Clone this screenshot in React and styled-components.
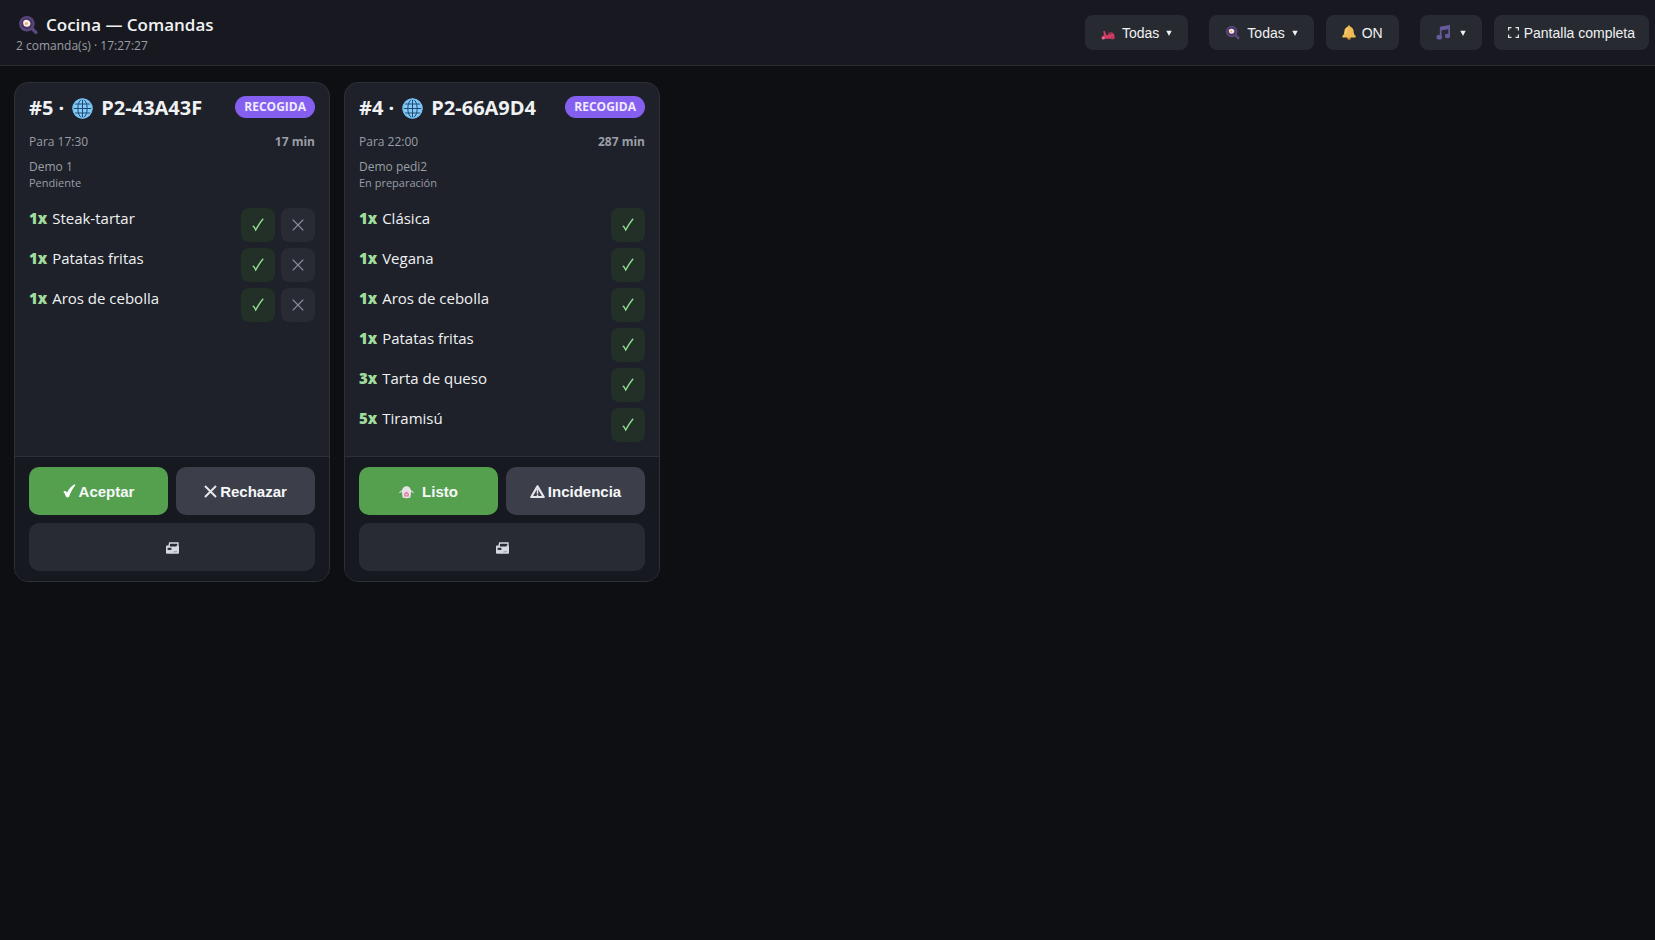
import React, { useState } from 'react';
import styled, { createGlobalStyle } from 'styled-components';

const GlobalStyle = createGlobalStyle`
    * {
        box-sizing: border-box;
    }

    body {
        margin: 0;
        background: #0e0f12;
        color: #f0f1f3;
        font-family: 'Open Sans', 'Noto Sans', sans-serif;
    }

    svg {
        display: block;
        flex: none;
    }
`

const Header = styled.header`
    display: flex;
    justify-content: space-between;
    align-items: center;
    padding: 11px 6px 11px 16px;
    background: #181920;
    border-bottom: 1px solid #2b2d33;
`

const Heading = styled.div`
    padding-top: 2px;
`

const Title = styled.h1`
    display: flex;
    align-items: center;
    gap: 8px;
    margin: 0;
    padding-left: 2px;
    font-size: 17px;
    line-height: 24px;
    font-weight: 600;
`

const Subtitle = styled.p`
    margin: 0;
    font-size: 12px;
    line-height: 17px;
    color: #9a9ea6;
`

const Toolbar = styled.div`
    display: flex;
    gap: 21px;
`

const ToolGroup = styled.div`
    display: flex;
    gap: 12px;
`

const ToolButton = styled.button`
    display: flex;
    align-items: center;
    gap: ${props => props.$gap || 7}px;
    height: 35px;
    padding: 0 ${props => props.$pad || 16}px;
    border: 0;
    border-radius: 8px;
    background: #272a31;
    color: #f0f1f3;
    font: 14px 'Liberation Sans', Arial, sans-serif;
    cursor: pointer;
`

const Board = styled.main`
    display: grid;
    grid-template-columns: repeat(auto-fill, minmax(300px, 1fr));
    gap: 14px;
    padding: 16px 5px 14px 14px;
`

const Card = styled.article`
    display: flex;
    flex-direction: column;
    overflow: hidden;
    border: 1px solid #2d3038;
    border-radius: 14px;
    background: #1e2129;
`

const CardBody = styled.div`
    flex: 1;
    padding: 13px 14px 14px;
`

const CardRow = styled.div`
    display: flex;
    justify-content: space-between;
    align-items: flex-start;
`

const OrderCode = styled.h2`
    display: flex;
    align-items: center;
    gap: 8px;
    margin: 0;
    font-size: 20px;
    line-height: 24px;
    font-weight: 700;
`

const Badge = styled.span`
    padding: 0 9px;
    border-radius: 11px;
    background: #8560f0;
    color: #f0ebff;
    font-size: 12px;
    line-height: 22px;
    font-weight: 700;
`

const Meta = styled.div`
    display: flex;
    justify-content: space-between;
    margin: 13px 0 7px;
    color: #9a9ea6;
    font-size: 12px;
    line-height: 18px;
`

const Customer = styled.p`
    margin: 0;
    color: #9a9ea6;
    font-size: 12px;
    line-height: 17px;
`

const Status = styled.p`
    margin: 0;
    color: #9a9ea6;
    font-size: 11px;
    line-height: 16px;
`

const Items = styled.ul`
    display: flex;
    flex-direction: column;
    gap: 6px;
    margin: 17px 0 0;
    padding: 0;
    list-style: none;
`

const Item = styled.li`
    display: flex;
    justify-content: space-between;
    font-size: 15px;
    line-height: 20px;
`

const Quantity = styled.b`
    margin-right: 1px;
    color: #a0dc9c;
    font-weight: 800;
`

const ItemActions = styled.div`
    display: flex;
    gap: 6px;
`

const ItemButton = styled.button`
    display: grid;
    place-items: center;
    width: 34px;
    height: 34px;
    padding: 0;
    border: 0;
    border-radius: 8px;
    background: ${props => props.$ok ? '#223028' : '#282a34'};
    color: ${props => props.$ok ? '#8fdc8a' : '#9194a0'};
    cursor: pointer;
`

const CardFooter = styled.footer`
    display: grid;
    grid-template-columns: 1fr 1fr;
    gap: 8px;
    padding: 10px 14px;
    border-top: 1px solid #2d3038;
    background: #161920;
`

const backgrounds = { accept: '#54a04f', neutral: '#3c3e49', print: '#282b32' }

const ActionButton = styled.button`
    display: flex;
    justify-content: center;
    align-items: center;
    gap: ${props => props.$gap || 3}px;
    grid-column: ${props => props.$kind === 'print' ? '1 / -1' : 'auto'};
    height: 48px;
    border: 0;
    border-radius: 10px;
    background: ${props => backgrounds[props.$kind]};
    color: #f6f7f9;
    font: bold 15px 'Liberation Sans', Arial, sans-serif;
    cursor: pointer;
`

const PanIcon = ({ size }) => (
    <svg width={size} height={size} viewBox="0 0 18 18" aria-hidden="true">
        <path d="M12.5 12l3.500 3.700" stroke="#5a4a7c" strokeWidth="3" strokeLinecap="round" />
        <circle cx="8" cy="7.8" r="7" fill="#5a467e" />
        <circle cx="8" cy="7.8" r="5" fill="#463560" />
        <path d="M4.6 7.2c0-2.2 1.6-3 3.400-2.800 1.800 0 3.200 1.400 3.200 3.200 0 1.800-1.500 3.200-3.400 3-1.800-.1-3.200-1.400-3.200-3.400z" fill="#fbeeea" />
        <circle cx="7.5" cy="7.8" r="1.3" fill="#eda768" />
    </svg>
)

const ScooterIcon = () => (
    <svg width="14" height="14" viewBox="0 0 14 14" aria-hidden="true">
        <path d="M2.2 5.2l1.6-.4 1.6 4.400 1.800-.2.2-2.200 3.600-.6 2 2 .8 3.800-.8.8H.6L.4 11l2.600-2z" fill="#d23e63" />
        <path d="M7.6 7l3.600-.4.8 1.200-4.400.6z" fill="#8f3049" />
        <circle cx="2.4" cy="12.2" r="1.3" fill="#e0749a" />
        <circle cx="11.3" cy="12.2" r="1.4" fill="#b8345a" />
    </svg>
)

const BellIcon = () => (
    <svg width="14" height="15" viewBox="0 0 14 15" aria-hidden="true">
        <circle cx="7" cy="12.8" r="1.9" fill="#d98a2b" />
        <path d="M7 .6c.8 0 1.2.5 1.3 1.2 2.4.7 3.3 2.7 3.4 5 .1 2 .8 3.2 1.9 4.3.5.6.2 1.5-.6 1.500H1c-.8 0-1.100-.9-.6-1.500 1.100-1.100 1.800-2.300 1.900-4.300.1-2.300 1-4.300 3.400-5C5.800 1.100 6.200.6 7 .6z" fill="#f0bb55" />
        <path d="M5.3 3.2C3.9 4.2 4 6.5 3.7 8.5" stroke="#ffdf8c" fill="none" />
    </svg>
)

const MusicIcon = () => (
    <svg width="15" height="15" viewBox="0 0 16 16" aria-hidden="true">
        <path d="M5 12.5V2.5L14 1v10.3" fill="none" stroke="#675a9c" strokeWidth="1.8" />
        <path d="M5 2L14.8.6v3.600L5 5.8z" fill="#675a9c" />
        <ellipse cx="3.5" cy="13" rx="3" ry="2.5" fill="#675a9c" />
        <ellipse cx="12.3" cy="11.6" rx="2.8" ry="2.4" fill="#675a9c" />
    </svg>
)

const ExpandIcon = () => (
    <svg width="11" height="11" viewBox="0 0 11 11" aria-hidden="true">
        <path d="M.6 3.5V.6h2.9M7.5.6h2.9v2.9M10.4 7.5v2.9H7.5M3.5 10.4H.6V7.5" fill="none" stroke="#e4e6ea" strokeWidth="1.2" />
    </svg>
)

const CaretIcon = () => (
    <svg width="6" height="6" viewBox="0 0 6 6" aria-hidden="true">
        <path d="M.3.8h5.4L3 6z" fill="#f0f1f3" />
    </svg>
)

const GlobeIcon = () => (
    <svg width="21" height="21" viewBox="0 0 21 21" aria-hidden="true">
        <circle cx="10.5" cy="10.5" r="10" fill="#86cbf8" />
        <g fill="none" stroke="#1d4a75" strokeWidth="1">
            <ellipse cx="10.5" cy="10.5" rx="4.7" ry="9.2" />
            <path d="M10.5 1.5v18M1.5 10.5h18M3 6h15M3 15h15" />
        </g>
        <circle cx="10.5" cy="10.5" r="9.5" fill="none" stroke="#74bdf0" strokeWidth="1.4" />
    </svg>
)

const CheckIcon = () => (
    <svg width="12" height="14" viewBox="0 0 12 14" aria-hidden="true">
        <path d="M.8 8c1.400.5 2.200 2.200 2.900 4C6 8 8 4.400 11.200.8" fill="none" stroke="currentColor" strokeWidth="1.4" />
    </svg>
)

const CrossIcon = () => (
    <svg width="12" height="12" viewBox="0 0 12 12" aria-hidden="true">
        <path d="M.7.7l10.6 10.600M11.300.7L.7 11.300" stroke="currentColor" strokeWidth="1.2" />
    </svg>
)

const BoldCheckIcon = () => (
    <svg width="13" height="14" viewBox="0 0 13 14" aria-hidden="true">
        <path d="M.3 8C1.6 6.6 3.2 6.8 4 8.8 5.5 5.3 8 2.2 11.5.3l1 .7C9.9 4 7.7 8 6.2 12.5c-.6 1.2-2.9 1.200-3.300.1C2.300 10.600 1.600 9 .3 8z" fill="#fff" />
    </svg>
)

const BoldCrossIcon = () => (
    <svg width="13" height="13" viewBox="0 0 13 13" aria-hidden="true">
        <path d="M1 1l11 11M12 1L1 12" stroke="#e4e6ea" strokeWidth="2" />
    </svg>
)

const BagIcon = () => (
    <svg width="15" height="15" viewBox="0 0 16 15" aria-hidden="true">
        <path d="M3.500 6.500L.8 8.500M12.500 6.500L15.200 8.500" stroke="#c9ccd0" strokeWidth="1.4" strokeLinecap="round" />
        <path d="M3 7.500C3.400 3.500 5.500 1.800 8 1.800s4.600 1.700 5 5.700l-.8 6.500c-2.600.8-5.800.8-8.400 0z" fill="#e6e2e8" />
        <path d="M5.500 9.700L8 7.400l2.500 2.300v3h-5z" fill="#e0809f" />
        <path d="M7 10.200h2v1.300H7z" fill="#f9e3ec" />
    </svg>
)

const WarningIcon = () => (
    <svg width="15" height="13" viewBox="0 0 15 13" aria-hidden="true">
        <path d="M7.500 1.300L13.700 12H1.300z" fill="none" stroke="#e4e6ea" strokeWidth="2.200" strokeLinejoin="round" />
        <path d="M7.500 4v4.800M7.500 9.600v1.400" stroke="#e4e6ea" strokeWidth="1.5" />
    </svg>
)

const PrinterIcon = () => (
    <svg width="13" height="14" viewBox="0 0 13 14" aria-hidden="true">
        <path d="M3 6l.6-3H12v3" fill="none" stroke="#d5d9e0" strokeWidth="1.3" />
        <path d="M1 5.600h3V6.500h6.500V5.600H12q1 0 1 1v6.200q0 1-1 1H1q-1 0-1-1V6.600q0-1 1-1z" fill="#d5d9e0" />
        <path d="M1.600 7.800h3.800v2.200H1.600z" fill="#30343c" />
        <path d="M7.500 12l3.500-.5" stroke="#979ca5" />
    </svg>
)

const orders = [
    {
        number: 5,
        code: 'P2-43A43F',
        time: '17:30',
        minutes: 17,
        customer: 'Demo 1',
        status: 'Pendiente',
        pending: true,
        items: [[1, 'Steak-tartar'], [1, 'Patatas fritas'], [1, 'Aros de cebolla']],
    },
    {
        number: 4,
        code: 'P2-66A9D4',
        time: '22:00',
        minutes: 287,
        customer: 'Demo pedi2',
        status: 'En preparación',
        pending: false,
        items: [
            [1, 'Clásica'],
            [1, 'Vegana'],
            [1, 'Aros de cebolla'],
            [1, 'Patatas fritas'],
            [3, 'Tarta de queso'],
            [5, 'Tiramisú'],
        ],
    },
]

const OrderCard = ({ order }) => (
    <Card>
        <CardBody>
            <CardRow>
                <OrderCode>#{order.number} · <GlobeIcon /> {order.code}</OrderCode>
                <Badge>RECOGIDA</Badge>
            </CardRow>
            <Meta>
                <span>Para {order.time}</span>
                <strong>{order.minutes} min</strong>
            </Meta>
            <Customer>{order.customer}</Customer>
            <Status>{order.status}</Status>
            <Items>
                {order.items.map(([quantity, name]) => (
                    <Item key={name}>
                        <span><Quantity>{quantity}x</Quantity> {name}</span>
                        <ItemActions>
                            <ItemButton $ok aria-label={`Marcar ${name}`}><CheckIcon /></ItemButton>
                            {order.pending && (
                                <ItemButton aria-label={`Quitar ${name}`}><CrossIcon /></ItemButton>
                            )}
                        </ItemActions>
                    </Item>
                ))}
            </Items>
        </CardBody>
        <CardFooter>
            {order.pending ? (
                <>
                    <ActionButton $kind="accept"><BoldCheckIcon />Aceptar</ActionButton>
                    <ActionButton $kind="neutral"><BoldCrossIcon />Rechazar</ActionButton>
                </>
            ) : (
                <>
                    <ActionButton $kind="accept" $gap={8}><BagIcon />Listo</ActionButton>
                    <ActionButton $kind="neutral"><WarningIcon />Incidencia</ActionButton>
                </>
            )}
            <ActionButton $kind="print" aria-label="Imprimir"><PrinterIcon /></ActionButton>
        </CardFooter>
    </Card>
)

const App = () => {
    const [sound, setSound] = useState(true)

    return (
        <>
            <GlobalStyle />
            <Header>
                <Heading>
                    <Title><PanIcon size={20} />Cocina — Comandas</Title>
                    <Subtitle>{orders.length} comanda(s) · 17:27:27</Subtitle>
                </Heading>
                <Toolbar>
                    <ToolButton><ScooterIcon />Todas<CaretIcon /></ToolButton>
                    <ToolGroup>
                        <ToolButton><PanIcon size={15} />Todas<CaretIcon /></ToolButton>
                        <ToolButton $gap={6} onClick={() => setSound(!sound)}><BellIcon />{sound ? 'ON' : 'OFF'}</ToolButton>
                    </ToolGroup>
                    <ToolGroup>
                        <ToolButton $gap={9} aria-label="Sonido"><MusicIcon /><CaretIcon /></ToolButton>
                        <ToolButton $pad={14} $gap={5}><ExpandIcon />Pantalla completa</ToolButton>
                    </ToolGroup>
                </Toolbar>
            </Header>
            <Board>
                {orders.map(order => (
                    <OrderCard key={order.number} order={order} />
                ))}
            </Board>
        </>
    )
}

export default App;
